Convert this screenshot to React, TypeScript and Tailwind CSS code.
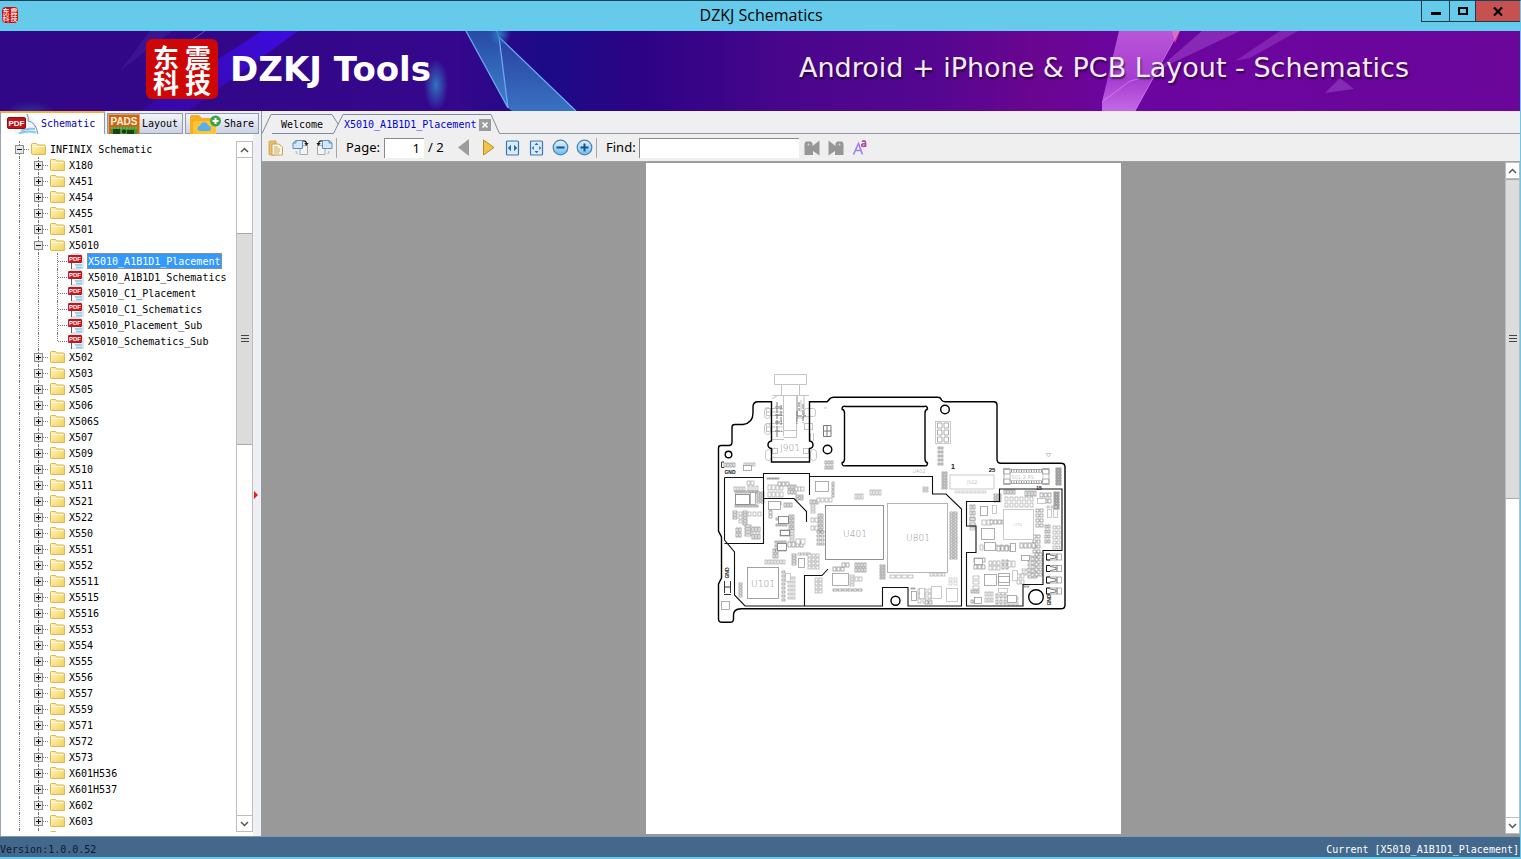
import React, { useState } from "react";

const mono = "font-['DejaVu_Sans_Mono','Liberation_Mono',monospace] text-[10px]";

/* ---------- Icons ---------- */

function FolderIcon() {
  return (
    <svg width="15" height="14" viewBox="0 0 15 14" className="shrink-0">
      <defs>
        <linearGradient id="fold" x1="0" y1="0" x2="1" y2="1">
          <stop offset="0" stopColor="#fff6bd" />
          <stop offset="1" stopColor="#f3d35c" />
        </linearGradient>
      </defs>
      <path d="M.5 2.5Q.5 1.5 1.5 1.5H5.5L6.7 3H13.5Q14.4 3 14.4 4V12.4H1.5Q.5 12.4 .5 11.5Z" fill="url(#fold)" stroke="#dcb548" strokeWidth="1" />
      <path d="M1.5 4.5H13.5" stroke="#fffbe0" strokeWidth="1" />
    </svg>
  );
}

function PdfSmallIcon() {
  return (
    <svg width="16" height="16" viewBox="0 0 16 16" className="shrink-0">
      <path d="M3.5 1H12L15 5V16H3.5Z" fill="#f4f9fc" stroke="#a9c4d2" strokeWidth=".8" />
      <path d="M7 12H14M8 14.5H14" stroke="#86c5e4" strokeWidth="1.5" />
      <path d="M3.5 10V16" stroke="#56646d" />
      <rect x="0" y="2" width="14" height="8" rx="1" fill="#c8141c" />
      <text x="7" y="8.4" textAnchor="middle" fontSize="6" fontWeight="700" fill="#fff" fontFamily="Liberation Sans, sans-serif">PDF</text>
    </svg>
  );
}

function PdfLargeIcon() {
  return (
    <svg width="32" height="20" viewBox="0 0 32 20" className="shrink-0">
      <path d="M8 0H22L30 9V20H8Z" fill="#eef6fa" />
      <path d="M20 0Q22 4 21 7Q29 8 31 20" fill="#dbe9f1" stroke="#7c97a6" strokeWidth="1" />
      <path d="M14 16.500Q20 14 28 15M12 19.500Q20 16 29 18.500" stroke="#8ac9e8" strokeWidth="2" fill="none" />
      <rect x=".5" y="3.500" width="18" height="11" rx="1.500" fill="#c4121b" stroke="#8e0b12" />
      <text x="9.500" y="12.200" textAnchor="middle" fontSize="8" fontWeight="700" fill="#fff" fontFamily="Liberation Sans, sans-serif">PDF</text>
    </svg>
  );
}

function PadsIcon() {
  return (
    <svg width="32" height="20" viewBox="0 0 32 20" className="shrink-0">
      <rect x=".5" y=".5" width="31" height="21" fill="#c9641f" stroke="#e3a25f" />
      <text x="16" y="11" textAnchor="middle" fontSize="10" fontWeight="700" fill="#fff3cf" fontFamily="Liberation Sans, sans-serif">PADS</text>
      <rect x="3" y="13" width="26" height="7" fill="#3f9a2c" />
      <path d="M5 15H12V20H5ZM19 16H26V20H19Z" fill="#223c1c" />
      <circle cx="16" cy="17.500" r="2" fill="#1c2f19" />
      <path d="M3 14H29" stroke="#7ed25a" strokeDasharray="2 1" />
    </svg>
  );
}

function ShareIcon() {
  return (
    <svg width="32" height="20" viewBox="0 0 32 20" className="shrink-0">
      <path d="M0 3Q0 1 2 1H9L12 4H24Q26 4 26 6V20H0Z" fill="#f8ae22" />
      <path d="M3 9Q3 7 5 7H26V20H3Z" fill="#fcc535" />
      <path d="M11 17Q7.500 17 7.500 14.200Q7.500 12 10 11.700Q11 8 14.300 8.200Q17.500 8.400 18 11.500Q21 12 21 14.400Q21 17 18 17Z" fill="#58b0ee" />
      <circle cx="25.500" cy="7" r="5.500" fill="#3fa34c" />
      <path d="M25.500 4V10M22.500 7H28.500" stroke="#fff" strokeWidth="2" />
    </svg>
  );
}

function CopyIcon() {
  return (
    <svg width="16" height="16" viewBox="0 0 16 16">
      <path d="M1 2Q1 1 2 1H8V15H2Q1 15 1 14Z" fill="#ecbf68" stroke="#cf9a3c" strokeWidth=".8" />
      <path d="M4 4H11L14.500 7V15H4Z" fill="#fdf5e0" stroke="#c39a52" strokeWidth=".9" />
      <path d="M6 7H10M6 9H12M6 11H12M6 13H11" stroke="#c7a064" strokeWidth=".9" />
    </svg>
  );
}

function RotateIcon({ left }: { left?: boolean }) {
  return (
    <svg width="17" height="17" viewBox="0 0 17 17">
      <g transform={left ? "translate(17 0) scale(-1 1)" : undefined}>
        <path d="M8 6.500H15.500V15.500H8Z" fill="#f3f4f6" stroke="#a6a9ad" />
        <path d="M1 4L4 1.500H10.500V9.500H1Z" fill="#d4e8fa" stroke="#5b8fc4" />
        <path d="M1 4H4V1.500" fill="none" stroke="#5b8fc4" />
        <path d="M11 1.800Q14.500 1.500 14.500 5" fill="none" stroke="#222" strokeWidth="1.300" />
        <path d="M12.300 4H16.700L14.500 7Z" fill="#222" />
        <path d="M5.500 15Q4 14 4 12" fill="none" stroke="#b5b8bc" strokeWidth="1.200" />
      </g>
    </svg>
  );
}

function FitIcon({ page }: { page?: boolean }) {
  return (
    <svg width="15" height="16" viewBox="0 0 15 16">
      <rect x="1.500" y="1" width="12" height="14" rx="1" fill="#d9ebfb" stroke="#3f76b5" strokeWidth="1.200" />
      {page ? (
        <path d="M7.500 2.800L9.500 5H5.500ZM7.500 13.200L9.500 11H5.500ZM2.800 8L4.800 6V10ZM12.200 8L10.200 6V10Z" fill="#2d68ac" />
      ) : (
        <path d="M2.800 8L6 4.800V11.200ZM12.200 8L9 4.800V11.200Z" fill="#2d68ac" />
      )}
    </svg>
  );
}

function ZoomIcon({ plus }: { plus?: boolean }) {
  return (
    <svg width="17" height="17" viewBox="0 0 17 17">
      <defs>
        <linearGradient id="zm" x1="0" y1="0" x2="0" y2="1">
          <stop offset="0" stopColor="#e6f5ff" />
          <stop offset="1" stopColor="#69bdf0" />
        </linearGradient>
      </defs>
      <circle cx="8.500" cy="8.500" r="7.300" fill="url(#zm)" stroke="#4580b8" strokeWidth="1.200" />
      <path d={plus ? "M4.500 8.500H12.500M8.500 4.500V12.500" : "M4.500 8.500H12.500"} stroke="#1d5289" strokeWidth="2" />
    </svg>
  );
}

function FindIcon({ next }: { next?: boolean }) {
  return (
    <svg width="16" height="16" viewBox="0 0 16 16">
      <g transform={next ? "translate(16 0) scale(-1 1)" : undefined} fill="#969696">
        <path d="M.5 3.500L2 1.500H7L8.500 3.500V6L15.500 .5V15.500L9 11V15H.5Z" />
      </g>
      <circle cx={next ? 11.5 : 4.5} cy="4.500" r="1" fill="#d4d4d4" />
    </svg>
  );
}

/* ---------- Banner ---------- */

function BannerArt() {
  return (
    <svg className="absolute inset-0 h-full w-full" viewBox="0 0 1520 80" preserveAspectRatio="none" aria-hidden="true">
      <defs>
        <linearGradient id="bn">
          <stop offset="0" stopColor="#300786" />
          <stop offset=".3" stopColor="#35078c" />
          <stop offset=".36" stopColor="#1c0a86" />
          <stop offset=".42" stopColor="#2c0385" />
          <stop offset=".52" stopColor="#49068c" />
          <stop offset=".62" stopColor="#560690" />
          <stop offset=".68" stopColor="#6a0590" />
          <stop offset=".74" stopColor="#6c05a0" />
          <stop offset="1" stopColor="#6a069a" />
        </linearGradient>
        <linearGradient id="shard" x1="0" y1="0" x2="0" y2="1">
          <stop offset="0" stopColor="#274aa6" />
          <stop offset="1" stopColor="#3e84cc" />
        </linearGradient>
        <linearGradient id="streak" x1="1" y1="0" x2="0" y2="1">
          <stop offset="0" stopColor="#3d0be0" />
          <stop offset="1" stopColor="#3d0be0" stopOpacity=".3" />
        </linearGradient>
        <linearGradient id="pink" x1="0" y1="0" x2="0" y2="1">
          <stop offset="0" stopColor="#bb55d8" />
          <stop offset=".6" stopColor="#a53cd0" />
          <stop offset="1" stopColor="#c468e6" />
        </linearGradient>
        <radialGradient id="glow">
          <stop offset="0" stopColor="#2f7fc4" stopOpacity=".9" />
          <stop offset="1" stopColor="#2f7fc4" stopOpacity="0" />
        </radialGradient>
      </defs>
      <rect width="1520" height="80" fill="url(#bn)" />
      <path d="M262 0H298L188 80H140L215 30Z" fill="url(#streak)" />
      <path d="M150 0H172L120 40Z" fill="#5a3ab0" opacity=".25" />
      <path d="M205 0L170 24" stroke="#7a68cc" opacity=".7" />
      <ellipse cx="30" cy="82" rx="26" ry="12" fill="url(#glow)" opacity=".4" />
      <ellipse cx="436" cy="54" rx="12" ry="26" fill="url(#glow)" />
      <path d="M466 0H497L499 6L508 77Z" fill="url(#shard)" />
      <path d="M499 6L576 80H512L508 77Z" fill="url(#shard)" opacity=".85" />
      <path d="M466 0L508 77M497 0L499 6L576 80M499 6L508 77" stroke="#6ca8f0" strokeWidth="1.300" fill="none" />
      <ellipse cx="500" cy="3" rx="11" ry="12" fill="url(#glow)" />
      <path d="M1202 0H1240L1168 34L1135 58Z" fill="#a44bd0" opacity=".5" />
      <path d="M1280 0H1298L1250 27L1235 30Z" fill="#9a40c4" opacity=".5" />
      <path d="M1119 0H1179L1135 80H1102V71Z" fill="url(#pink)" />
      <path d="M1179 0L1135 80M1102 71L1130 50L1150 45" stroke="#dc9af2" fill="none" opacity=".6" />
      <path d="M1172 0H1180L1175 12Z" fill="#ff79b8" opacity=".6" />
      <path d="M1325 62L1340 47L1354 58Z" fill="#8a35b8" opacity=".8" />
    </svg>
  );
}

function Banner() {
  return (
    <header className="relative flex h-20 shrink-0 items-center overflow-hidden bg-[#300786] text-white">
      <BannerArt />
      <div className="relative mb-1 ml-[146px] grid h-[60px] w-[72px] shrink-0 grid-cols-2 content-center justify-items-center rounded-md bg-[#cf0606] px-1 font-['Noto_Sans_CJK_SC',sans-serif] text-[26px] font-bold leading-[25px]">
        <span>东</span>
        <span>震</span>
        <span>科</span>
        <span>技</span>
      </div>
      <h1 className="relative mb-1 ml-3 whitespace-nowrap font-['DejaVu_Sans',sans-serif] text-[34px] font-bold leading-none">DZKJ Tools</h1>
      <p className="relative mb-2 ml-auto mr-[111px] whitespace-nowrap font-['DejaVu_Sans',sans-serif] text-[27px] font-normal leading-none text-[#f3ecfa] [text-shadow:1px_2px_2px_#00000099]">
        Android + iPhone &amp; PCB Layout - Schematics
      </p>
    </header>
  );
}

/* ---------- Tree ---------- */

const before = ["X180", "X451", "X454", "X455", "X501"];
const files = [
  "X5010_A1B1D1_Placement",
  "X5010_A1B1D1_Schematics",
  "X5010_C1_Placement",
  "X5010_C1_Schematics",
  "X5010_Placement_Sub",
  "X5010_Schematics_Sub",
];
const after = [
  "X502", "X503", "X505", "X506", "X506S", "X507", "X509", "X510", "X511", "X521", "X522",
  "X550", "X551", "X552", "X5511", "X5515", "X5516", "X553", "X554", "X555", "X556", "X557",
  "X559", "X571", "X572", "X573", "X601H536", "X601H537", "X602", "X603", "",
];

function Guide({ line = true, half, expander, branch }: { line?: boolean; half?: boolean; expander?: "+" | "-"; branch?: boolean }) {
  return (
    <span className="relative h-4 w-[19px] shrink-0">
      {line && <span className={`absolute left-[9px] top-0 border-l border-dotted border-[#777] ${half ? "h-2" : "h-4"}`} />}
      {(expander || branch) && <span className="absolute left-[10px] right-0 top-2 border-t border-dotted border-[#777]" />}
      {expander && (
        <svg className="absolute left-[5px] top-1" width="9" height="9" viewBox="0 0 9 9">
          <rect x=".5" y=".5" width="8" height="8" fill="#e8e8e8" stroke="#8c8c8c" />
          <path d={expander === "+" ? "M2 4.500H7M4.500 2V7" : "M2 4.500H7"} stroke="#111" />
        </svg>
      )}
    </span>
  );
}

function FolderRow({ name, open }: { name: string; open?: boolean }) {
  return (
    <li className="flex h-4 items-center">
      <Guide />
      <Guide expander={open ? "-" : "+"} />
      <button aria-label={name || "Folder"} className="ml-0.5 flex items-center gap-1 whitespace-nowrap">
        <FolderIcon />
        <span className="pt-px leading-[15px]">{name}</span>
      </button>
    </li>
  );
}

function Tree({ selected, onSelect }: { selected: string; onSelect: (f: string) => void }) {
  return (
    <ul className={`min-w-0 flex-1 overflow-hidden pl-[9px] text-black ${mono}`}>
      <li className="flex h-4 items-center">
        <Guide expander="-" />
        <button className="ml-0.5 flex items-center gap-1 whitespace-nowrap">
          <FolderIcon />
          <span className="pt-px leading-[15px]">INFINIX Schematic</span>
        </button>
      </li>
      {before.map((n) => <FolderRow key={n} name={n} />)}
      <FolderRow name="X5010" open />
      {files.map((f, i) => (
        <li key={f} className="flex h-4 items-center">
          <Guide />
          <Guide />
          <Guide branch half={i === files.length - 1} />
          <button onClick={() => onSelect(f)} className="ml-px flex items-center gap-[3px] whitespace-nowrap">
            <PdfSmallIcon />
            <span className={`border border-dotted pt-px leading-[13px] ${f === selected ? "border-[#d08a30] bg-[#3399ff] pr-px text-white" : "border-transparent"}`}>{f}</span>
          </button>
        </li>
      ))}
      {after.map((n) => <FolderRow key={n} name={n} />)}
    </ul>
  );
}

/* ---------- Scrollbar ---------- */

function ScrollBar({ width, start, size, end }: { width: string; start: string; size: string; end: string }) {
  return (
    <div className={`flex shrink-0 flex-col border border-[#bdbdbd] bg-white ${width}`}>
      <button aria-label="Scroll up" className="flex h-4 shrink-0 items-center justify-center border-b border-[#bdbdbd]">
        <svg width="9" height="6" viewBox="0 0 9 6"><path d="M1 5L4.500 1.500L8 5" fill="none" stroke="#555" strokeWidth="1.500" /></svg>
      </button>
      <div className="flex min-h-0 flex-1 flex-col">
        <div className={`basis-0 ${start}`} />
        <div className={`flex basis-0 flex-col items-center justify-center gap-0.5 border-y border-[#a9a9a9] bg-[#dcdcdc] ${size}`}>
          <span className="h-px w-2 bg-[#444]" />
          <span className="h-px w-2 bg-[#444]" />
          <span className="h-px w-2 bg-[#444]" />
        </div>
        <div className={`basis-0 ${end}`} />
      </div>
      <button aria-label="Scroll down" className="flex h-4 shrink-0 items-center justify-center border-t border-[#bdbdbd]">
        <svg width="9" height="6" viewBox="0 0 9 6"><path d="M1 1L4.500 4.500L8 1" fill="none" stroke="#555" strokeWidth="1.500" /></svg>
      </button>
    </div>
  );
}

/* ---------- Board drawing ---------- */

// Banks of small parts: x, y, columns, rows, part width, part height, pitch x, pitch y, shade
type Bank = [number, number, number, number, number, number, number, number, string];
const D = "#777";
const M = "#999";
const L = "#bdbdbd";
const banks: Bank[] = [
  [734, 487, 4, 1, 2, 4, 3, 0, M], [747, 481, 2, 1, 3, 4, 4, 0, M], [748, 486, 3, 1, 2, 5, 4, 0, M],
  [735, 491, 8, 1, 2, 2, 3, 0, D], [735, 505, 8, 1, 2, 2, 3, 0, D],
  [757, 492, 2, 4, 3, 2, 4, 3, D], [733, 511, 1, 3, 4, 2, 0, 3, D], [739, 512, 1, 3, 3, 3, 0, 4, M],
  [743, 511, 1, 5, 4, 2, 0, 3, D], [748, 512, 3, 1, 3, 4, 5, 0, M], [736, 528, 2, 2, 2, 4, 3, 5, D],
  [745, 525, 1, 4, 6, 2, 0, 3, D], [752, 527, 3, 2, 2, 5, 3, 7, D],
  [767, 478, 4, 1, 3, 1, 3, 0, D], [768, 485, 4, 2, 3, 5, 4, 7, M], [778, 482, 3, 1, 3, 4, 4, 0, D], [788, 485, 3, 2, 2, 4, 3, 5, D],
  [795, 487, 3, 1, 3, 4, 3, 0, M], [796, 495, 2, 2, 3, 2, 4, 3, D],
  [769, 503, 1, 4, 3, 3, 0, 4, D], [771, 502, 3, 1, 2, 3, 4, 0, D], [784, 503, 3, 1, 2, 4, 3, 0, D],
  [776, 518, 4, 2, 2, 2, 3, 6, D], [789, 515, 2, 4, 2, 3, 3, 4, D], [780, 530, 4, 2, 2, 2, 3, 4, D],
  [790, 530, 1, 4, 4, 2, 0, 3, M], [775, 541, 4, 3, 2, 2, 3, 4, D], [788, 542, 4, 1, 3, 5, 4, 0, D],
  [796, 539, 2, 1, 4, 5, 5, 0, M], [773, 549, 2, 2, 2, 4, 3, 5, D],
  [765, 560, 7, 1, 2, 4, 3, 0, M], [792, 554, 1, 4, 4, 2, 0, 3, D], [798, 553, 4, 1, 3, 2, 3, 0, M],
  [808, 554, 3, 4, 3, 3, 4, 4, M], [739, 583, 1, 5, 3, 2, 0, 3, D],
  [782, 571, 1, 8, 3, 2, 0, 4, D], [788, 577, 2, 6, 3, 2, 4, 4, M],
  [810, 500, 3, 1, 2, 4, 3, 0, D], [817, 498, 4, 1, 3, 4, 4, 0, M], [832, 482, 1, 4, 2, 3, 0, 4, D],
  [811, 505, 1, 3, 4, 2, 0, 3, M], [818, 514, 2, 5, 2, 3, 3, 4, D], [817, 531, 2, 4, 3, 2, 4, 4, D], [811, 518, 2, 2, 3, 4, 4, 8, M],
  [855, 494, 3, 1, 2, 5, 3, 0, M], [870, 490, 4, 1, 2, 5, 3, 0, M],
  [815, 578, 2, 4, 3, 3, 4, 4, M], [833, 567, 3, 1, 3, 4, 4, 0, D], [842, 563, 2, 1, 3, 4, 4, 0, D],
  [855, 563, 4, 2, 2, 4, 3, 5, D], [850, 575, 1, 4, 4, 2, 0, 3, M], [833, 589, 6, 1, 4, 2, 5, 0, D],
  [855, 577, 2, 1, 3, 4, 4, 0, M], [880, 565, 2, 5, 2, 2, 3, 3, D],
  [890, 575, 4, 1, 5, 3, 6, 0, M], [930, 573, 4, 1, 3, 3, 4, 0, M],
  [950, 512, 2, 16, 3, 2, 4, 3, D], [949, 578, 2, 2, 3, 3, 5, 4, L], [918, 589, 3, 3, 3, 4, 5, 5, M],
  [911, 588, 1, 1, 4, 1, 0, 0, D], [925, 601, 2, 1, 3, 3, 4, 0, D],
  [942, 472, 2, 6, 2, 2, 3, 3, D], [938, 447, 2, 5, 2, 2, 3, 4, D], [923, 487, 2, 2, 2, 2, 3, 3, M],
  [953, 477, 1, 3, 2, 2, 0, 4, "#222"], [988, 477, 2, 3, 2, 2, 3, 4, "#222"],
  [955, 491, 8, 1, 3, 2, 4, 0, L], [994, 494, 2, 3, 3, 2, 4, 3, D],
  [1056, 468, 2, 6, 2, 2, 3, 3, "#444"], [1054, 492, 2, 6, 2, 2, 3, 3, "#444"],
  [1004, 490, 4, 1, 2, 4, 3, 0, D], [1005, 497, 6, 2, 3, 4, 5, 6, M], [1025, 491, 4, 1, 2, 5, 3, 0, D], [1040, 493, 3, 2, 3, 4, 4, 6, D],
  [970, 505, 2, 4, 2, 4, 3, 6, D], [982, 520, 2, 1, 4, 5, 5, 0, M], [990, 520, 4, 1, 3, 4, 4, 0, D],
  [970, 518, 1, 3, 5, 2, 0, 5, M], [1036, 509, 2, 4, 3, 3, 4, 5, D], [1047, 506, 3, 1, 2, 2, 4, 0, M],
  [1045, 525, 2, 4, 2, 3, 3, 5, D], [1053, 526, 2, 5, 3, 3, 4, 5, M], [1033, 535, 2, 4, 3, 3, 4, 5, D],
  [980, 545, 6, 1, 3, 5, 5, 0, M], [997, 546, 4, 1, 3, 5, 4, 0, D], [1020, 543, 4, 1, 3, 5, 4, 0, D],
  [974, 558, 3, 2, 3, 4, 4, 7, D], [989, 561, 3, 2, 3, 4, 4, 5, M], [1002, 560, 2, 2, 2, 4, 4, 5, D],
  [1008, 561, 2, 1, 3, 6, 4, 0, M], [1028, 556, 2, 6, 4, 2, 5, 4, D], [1035, 553, 2, 5, 3, 3, 4, 5, D],
  [973, 576, 1, 3, 6, 3, 0, 5, M], [1022, 569, 2, 2, 4, 2, 5, 4, M], [1017, 574, 2, 2, 3, 4, 4, 6, M],
  [971, 590, 3, 2, 2, 3, 3, 10, D], [985, 592, 3, 2, 2, 4, 3, 6, M], [996, 594, 3, 2, 2, 4, 4, 6, D], [1008, 597, 3, 2, 2, 3, 4, 5, M],
  [1024, 586, 1, 1, 5, 1, 0, 0, D],
  [724, 463, 4, 1, 2, 4, 3, 0, D], [744, 463, 4, 1, 2, 3, 3, 0, M], [825, 461, 3, 2, 2, 3, 3, 5, D],
];

// Plain outlined packages: x, y, width, height, shade
const boxes: [number, number, number, number, string][] = [
  [825.5, 505.5, 58, 54, "#777"], [887.5, 503.5, 60, 69, "#a5a5a5"], [747.5, 567.5, 31, 31, "#8a8a8a"], [1003.5, 509.5, 30, 30, L],
  [735.5, 494.5, 14, 10, D], [750.500, 492.5, 5, 12, M], [815.500, 481.5, 13, 10, M], [832.5, 573.5, 16, 12, M],
  [768.5, 501.500, 12, 8, M], [778.5, 516.500, 10, 7, D], [780.500, 530.5, 9, 5, D], [777.5, 543.500, 9, 7, D], [798.500, 558.500, 6, 9, M],
  [785.5, 573.500, 5, 8, L], [911.5, 591.5, 5, 9, M], [919.5, 588.500, 5, 10, L], [931.500, 586.5, 10, 12, L], [946.5, 588.500, 11, 13, L],
  [935.500, 421.500, 15, 22, L], [950, 475, 44, 14, L], [1004, 469.500, 45, 14, M], [1010, 472.500, 33, 8, L],
  [980.5, 506.5, 7, 9, M], [981.5, 528.500, 13, 11, M], [984.5, 542.5, 11, 8, M], [1010.500, 543.5, 5, 8, M], [1021.500, 555.500, 8, 5, M],
  [984.5, 574.500, 12, 11, M], [998.5, 573.500, 11, 12, M], [998.500, 576.500, 11, 6, M], [974.5, 558.500, 8, 6, M], [1012.500, 570.500, 5, 10, L],
  [974.5, 597.500, 7, 6, M], [1007.5, 595.500, 9, 7, M], [998.5, 588.500, 9, 4, L], [1037.5, 498.500, 8, 5, L], [1047.5, 509.500, 4, 8, L], [1053.500, 509.500, 4, 8, L],
  [721.500, 601.500, 8, 8, M], [743.500, 465.500, 8, 5, M], [992.500, 505.500, 4, 8, L],
];

function BoardLabel({ x, y, size, children, dark, rotate }: { x: number; y: number; size: number; children: string; dark?: boolean; rotate?: boolean }) {
  return (
    <text
      x={x}
      y={y}
      fontSize={size}
      textAnchor="middle"
      fill={dark ? "#111" : "#8f8f8f"}
      fontWeight={dark ? 700 : 200}
      fontFamily={dark ? "Liberation Sans, sans-serif" : "DejaVu Sans, sans-serif"}
      transform={rotate ? `rotate(-90 ${x} ${y})` : undefined}
    >
      {children}
    </text>
  );
}

function Board() {
  return (
    <svg className="block w-full shrink-0" viewBox="646 163 475 671" role="img" aria-label="Board placement">
      {/* headphone jack */}
      <g fill="none" stroke="#c4c4c4" strokeWidth="1">
        <path d="M774.500 374.500H806.500V384.500H774.500ZM781.500 384.500V395.500M799.500 384.500V395.500M772.500 395.500H809M783.500 395.500V436M796.500 395.500V432M777.500 395.500L772 399M783.500 430.500H796.500V437.500H783.500M772 439.500H784M797.500 396V418H804V396M801 400V412M773 457.500H809" />
        <rect x="766.500" y="408.500" width="17" height="7" /><rect x="766.500" y="423.500" width="17" height="8" />
        <rect x="804.500" y="408.500" width="11" height="8" rx="2" /><rect x="804.500" y="423.500" width="8" height="6" />
        <rect x="764.500" y="407.500" width="6" height="11" rx="3" /><rect x="764.500" y="423.500" width="6" height="11" rx="3" />
        <rect x="765.500" y="449.500" width="6" height="11" rx="3" /><rect x="810.500" y="449.500" width="6" height="11" rx="3" />
        <rect x="772.500" y="448.500" width="5" height="5" /><rect x="803.500" y="448.500" width="5" height="5" />
        <path d="M810.500 433V441M813.500 433V441M766 412H784M766 427H784" />
      </g>
      <path d="M775 407H782M775 415H782M775 422H782M775 431H782M777 402V437M781 405V425M797 416H806M799 402V411M803 404V423M797 411V424" stroke="#777" fill="none" strokeDasharray="5 1" />
      <BoardLabel x={790} y={451} size={9}>J901</BoardLabel>

      {banks.map(([x, y, cols, rows, w, h, dx, dy, c], i) => (
        <g key={i} fill="#fff" stroke={c} strokeWidth=".6">
          {Array.from({ length: cols * rows }, (_, k) => (
            <rect key={k} x={x + (k % cols) * dx} y={y + Math.floor(k / cols) * dy} width={w} height={h} />
          ))}
        </g>
      ))}
      {boxes.map(([x, y, w, h, c], i) => (
        <rect key={i} x={x} y={y} width={w} height={h} fill="#fff" stroke={c} strokeWidth=".8" />
      ))}

      {/* connector pins */}
      <path d="M1011 470.500H1043M1011 482.500H1043" stroke="#999" strokeWidth="3" strokeDasharray="1 1.500" />
      <path d="M1003.500 468.500H1010V474H1003.500ZM1003.500 479H1010V484.500H1003.500ZM1042.500 468.500H1049V474H1042.500ZM1042.500 479H1049V484.500H1042.500Z" fill="none" stroke="#aaa" />
      <path d="M937.500 423H942V428H937.500ZM944 423H948.500V428H944ZM937.500 430H942V435H937.500ZM944 430H948.500V435H944ZM937.500 437H942V442H937.500ZM944 437H948.500V442H944Z" fill="none" stroke="#999" strokeWidth=".8" />
      <path d="M823.500 425.500H831V436.500H823.500ZM827 425V437M823.500 431H831" fill="none" stroke="#777" strokeWidth="1" />
      <path d="M1046 453.500H1051L1048.500 457Z M824 408H827" fill="none" stroke="#bbb" strokeWidth=".8" />
      {[554, 565.5, 577, 588].map((y) => (
        <g key={y} fill="none">
          <rect x="1046.500" y={y} width="15" height="6" stroke="#999" strokeWidth=".8" />
          <path d={`M1050 ${y}H1046.500V${y + 6}H1050`} stroke="#111" />
          <path d={`M1050 ${y + 1}L1056 ${y + 2}V${y + 4}L1050 ${y + 5}M1057 ${y}V${y + 6}`} stroke="#555" strokeWidth=".8" />
        </g>
      ))}
      <path d="M724 594.500H731M724.500 581V593M730.500 581V593M725 587H730M721.500 462V467.500H724M721.500 462H724" stroke="#333" fill="none" />

      <BoardLabel x={855} y={537} size={9}>U401</BoardLabel>
      <BoardLabel x={918} y={541} size={9}>U801</BoardLabel>
      <BoardLabel x={763} y={587} size={9}>U101</BoardLabel>
      <BoardLabel x={972} y={484} size={5}>J502</BoardLabel>
      <BoardLabel x={1022} y={479} size={5}>J501-2.85</BoardLabel>
      <BoardLabel x={919} y={473} size={5}>U402</BoardLabel>
      <BoardLabel x={1018} y={526} size={4}>U70</BoardLabel>
      <BoardLabel x={730} y={474} size={5}  dark>GND</BoardLabel>
      <BoardLabel x={729} y={573} size={5} dark rotate>GND</BoardLabel>
      <BoardLabel x={1051} y={600} size={5} dark rotate>GND</BoardLabel>
      <BoardLabel x={953} y={469} size={7} dark>1</BoardLabel>
      <BoardLabel x={992} y={472} size={6} dark>25</BoardLabel>
      <BoardLabel x={1039} y={490} size={5} dark>15</BoardLabel>

      {/* shields */}
      <g fill="none" stroke="#111" strokeWidth="1.100">
        <path d="M724.500 477.500H763.500V473.500H809.500V495M809.500 476.500H932.500V494H946L961.500 509V606H908V587.500H882.500V606H745L734.500 595V552L724.500 540V477.500M724.500 543.500H763.500V477.500M763.500 498.500H794L806.500 511.500V522M804.500 606V575.500H822L828 569" />
        <path d="M966.500 501.500H999.500V489H1062V550.500H1043V584.500H1023V606H966.500V552.500H976V526H966.500Z" />
      </g>

      {/* board edge */}
      <g fill="none" stroke="#000" strokeWidth="1.400">
        <path d="M718.500 448Q718.500 445.500 721 445.500H729Q732 445.500 732 442V427Q732 424.500 735 424.500H743Q753 423 753 413V407Q753 401.800 758 401.800H771.500V441Q768 441.500 768 445Q768 448 771.500 448.500V462H809.500V448.500Q813 448 813 445Q813 441.500 809.500 441V401.800H827Q829 400 830 398.500Q831 397.200 834 397.200H938Q940.500 397.200 941.500 400Q942.500 401.800 945 401.800H994Q997 401.800 997 405V459Q997 463.300 1001 463.300H1061Q1065 463.300 1065 467V605Q1065 608.800 1061 608.800H741Q733.500 609 733.500 615V619Q733.500 622.300 730 622.300H722Q718.500 622.300 718.500 619V584L721.500 578V537L718.500 531Z" />
        <path d="M846 406.500H924Q927.500 405.500 927.500 409Q925 410 925 413V459Q925 462 927.500 463Q927.500 466.500 924 465.800H846Q842 466.500 842 463Q844.500 462 844.500 459V413Q844.500 410 842 409Q842 405.500 846 406.500Z" />
        <circle cx="728.500" cy="454.500" r="3.300" />
        <circle cx="827.500" cy="449.500" r="4.300" />
        <circle cx="945" cy="409.500" r="4.300" />
        <circle cx="895.500" cy="600.800" r="4.500" />
        <circle cx="1036" cy="597" r="7.300" />
      </g>
    </svg>
  );
}

/* ---------- Document area ---------- */

const toolButton = "flex h-6 w-6 shrink-0 items-center justify-center";

function DocumentTabs({ file }: { file: string }) {
  return (
    <nav className={`flex h-[23px] shrink-0 items-end bg-[#efeff2] ${mono}`}>
      <svg width="10" height="20" viewBox="0 0 10 20"><path d="M0 19.500L9 .5H10" fill="none" stroke="#7d8b99" /></svg>
      <button className="h-5 w-[60px] border-y border-[#7d8b99] text-black">Welcome</button>
      <svg width="12" height="20" viewBox="0 0 12 20"><path d="M0 .5L6 10M0 19.500H1.500L11 .5H12" fill="none" stroke="#7d8b99" /></svg>
      <div className="flex h-5 items-center gap-[3px] border-t border-[#7d8b99]">
        <button className="whitespace-nowrap text-[#0000d0]">{file}</button>
        <button aria-label="Close tab" className="flex h-3 w-3 items-center justify-center bg-[#9b9b9b]">
          <svg width="8" height="8" viewBox="0 0 8 8"><path d="M1.500 1.500L6.500 6.500M6.500 1.500L1.500 6.500" stroke="#fff" strokeWidth="1.600" /></svg>
        </button>
      </div>
      <svg width="9" height="20" viewBox="0 0 9 20"><path d="M0 .5L8.500 19.500H9" fill="none" stroke="#7d8b99" /></svg>
      <div className="h-5 flex-1 border-b border-[#8d99a5]" />
    </nav>
  );
}

function Toolbar() {
  const [page, setPage] = useState("1");
  const [query, setQuery] = useState("");
  return (
    <div className="flex h-7 shrink-0 items-center border-b border-[#a0a0a0] bg-[#efefef] pl-0.5 font-['Noto_Sans',sans-serif] text-[13px] text-black">
      <button aria-label="Copy" className={toolButton}><CopyIcon /></button>
      <button aria-label="Rotate right" className={toolButton}><RotateIcon /></button>
      <button aria-label="Rotate left" className={toolButton}><RotateIcon left /></button>
      <span className="h-5 w-px bg-[#a8a8a8]" />
      <label htmlFor="page" className="ml-[9px] w-[38px]">Page:</label>
      <input id="page" value={page} onChange={(e) => setPage(e.target.value)} className="h-5 w-10 border-l border-t border-[#8a8a8a] bg-white pr-1 text-right outline-none" />
      <span className="ml-1 w-6 whitespace-nowrap">/ 2</span>
      <button aria-label="Previous page" className={toolButton}>
        <svg width="13" height="17" viewBox="0 0 13 17"><path d="M11 0V17L0 8.500Z" fill="#9c9c9c" /></svg>
      </button>
      <button aria-label="Next page" className={toolButton}>
        <svg width="13" height="17" viewBox="0 0 13 17"><path d="M1.500 1L12 8.500L1.500 16Z" fill="#efc54c" stroke="#b98d1e" /></svg>
      </button>
      <button aria-label="Fit width" className={toolButton}><FitIcon /></button>
      <button aria-label="Fit page" className={toolButton}><FitIcon page /></button>
      <button aria-label="Zoom out" className={toolButton}><ZoomIcon /></button>
      <button aria-label="Zoom in" className={toolButton}><ZoomIcon plus /></button>
      <span className="h-5 w-px bg-[#a8a8a8]" />
      <label htmlFor="find" className="ml-[9px] w-[33px]">Find:</label>
      <input id="find" value={query} onChange={(e) => setQuery(e.target.value)} className="h-5 w-40 border-l border-t border-[#8a8a8a] bg-white px-1 outline-none" />
      <button aria-label="Find previous" className="ml-px flex h-6 w-6 shrink-0 items-center justify-center"><FindIcon /></button>
      <button aria-label="Find next" className={toolButton}><FindIcon next /></button>
      <button aria-label="Match case" className={toolButton}>
        <svg width="17" height="17" viewBox="0 0 17 17">
          <path d="M1.500 15.500L6.500 4.500L10.500 15.500M3.500 11.500H9" fill="none" stroke="#9a80f0" strokeWidth="1.600" />
          <path d="M10 2.500Q13.500 .8 13.500 4V8M13.500 4.800Q9.500 4.500 9.700 6.500Q10.500 8.500 13.500 6.500" fill="none" stroke="#b04a9c" strokeWidth="1.700" />
        </svg>
      </button>
    </div>
  );
}

/* ---------- Window ---------- */

export default function App() {
  const [selected, setSelected] = useState(files[0]);
  return (
    <div className="flex h-screen flex-col overflow-hidden border-r border-t border-r-[#66cbea] border-t-[#14435c] bg-[#66cbea]">
      <div className="flex h-[30px] shrink-0 items-start">
        <div className="flex flex-1 pl-0.5 pt-1.5">
          <div className="grid h-4 w-4 grid-cols-2 content-center justify-items-center rounded-sm bg-[#c90d0d] font-['Noto_Sans_CJK_SC',sans-serif] text-[7px] font-medium leading-[7px] text-white" aria-hidden="true">
            <span>东</span>
            <span>震</span>
            <span>科</span>
            <span>技</span>
          </div>
        </div>
        <div className="font-['Open_Sans',sans-serif] text-base leading-7 text-black">DZKJ Schematics</div>
        <div className="flex flex-1 justify-end">
          <div className="flex h-[21px] border-b border-l border-[#1c3a48]">
            <button aria-label="Minimize" className="flex w-7 items-center justify-center border-r border-[#1c3a48]"><span className="mt-1 h-[3px] w-2.5 bg-black" /></button>
            <button aria-label="Maximize" className="flex w-[26px] items-center justify-center border-r border-[#1c3a48]"><span className="h-2 w-2.5 border-2 border-black" /></button>
            <button aria-label="Close" className="flex w-11 items-center justify-center bg-[#c75050]">
              <svg width="10" height="9" viewBox="0 0 10 9"><path d="M1 .5L9 8.500M9 .5L1 8.500" stroke="#000" strokeWidth="2.200" /></svg>
            </button>
          </div>
        </div>
      </div>

      <Banner />

      <div className="flex min-h-0 flex-1 bg-[#efeff2]">
        <aside className="flex w-[261px] shrink-0 flex-col">
          <nav className={`flex h-[23px] shrink-0 items-end ${mono}`}>
            <button className="flex h-[23px] w-[105px] shrink-0 items-center gap-0.5 border-l border-r border-t-2 border-[#8c9cad] border-t-[#f5ae3c] bg-white pl-1.5 text-[#0000c0]">
              <PdfLargeIcon />
              Schematic
            </button>
            <button className="ml-0.5 flex h-[21px] w-[76px] shrink-0 items-center gap-0.5 border border-[#8c9cad] bg-gradient-to-b from-[#f4f5fa] to-[#cdd2e4] text-black">
              <PadsIcon />
              Layout
            </button>
            <button className="ml-0.5 flex h-[21px] w-[74px] shrink-0 items-center gap-0.5 border border-[#8c9cad] bg-gradient-to-b from-[#f4f5fa] to-[#cdd2e4] pl-1 text-black">
              <ShareIcon />
              Share
            </button>
          </nav>
          <div className="flex min-h-0 flex-1">
            <div className="flex min-w-0 flex-1 border-l border-[#9aa5b0] bg-white pb-1 pt-[7px]">
              <Tree selected={selected} onSelect={setSelected} />
              <ScrollBar width="w-[17px]" start="grow-[75]" size="grow-[211]" end="grow-[372]" />
            </div>
            <div className="flex w-2 items-center bg-[#f0f0f4] pt-5">
              <svg width="6" height="8" viewBox="0 0 6 8"><path d="M1 0L5 4L1 8Z" fill="#e81c1c" /></svg>
            </div>
          </div>
        </aside>

        <main className="flex min-w-0 flex-1 flex-col border-l border-[#8c9cad]">
          <DocumentTabs file={selected} />
          <Toolbar />
          <div className="flex min-h-0 flex-1 bg-[#999999] pb-0.5">
            <div className="flex min-w-0 flex-1 justify-center overflow-hidden pt-px">
              <div className="flex w-[475px] flex-col overflow-hidden bg-white">
                <Board />
              </div>
            </div>
            <ScrollBar width="w-[15px]" start="hidden" size="grow-[320]" end="grow-[321]" />
          </div>
        </main>
      </div>

      <footer className={`flex h-[21px] shrink-0 items-end justify-between border-t border-[#8398ac] bg-[#44688c] leading-[14px] ${mono}`}>
        <span className="text-[#0c1a33]">Version:1.0.0.52</span>
        <span className="pr-px text-white">Current [{selected}]</span>
      </footer>
      <div className="h-0.5 shrink-0 bg-[#66cbea]" />
    </div>
  );
}
